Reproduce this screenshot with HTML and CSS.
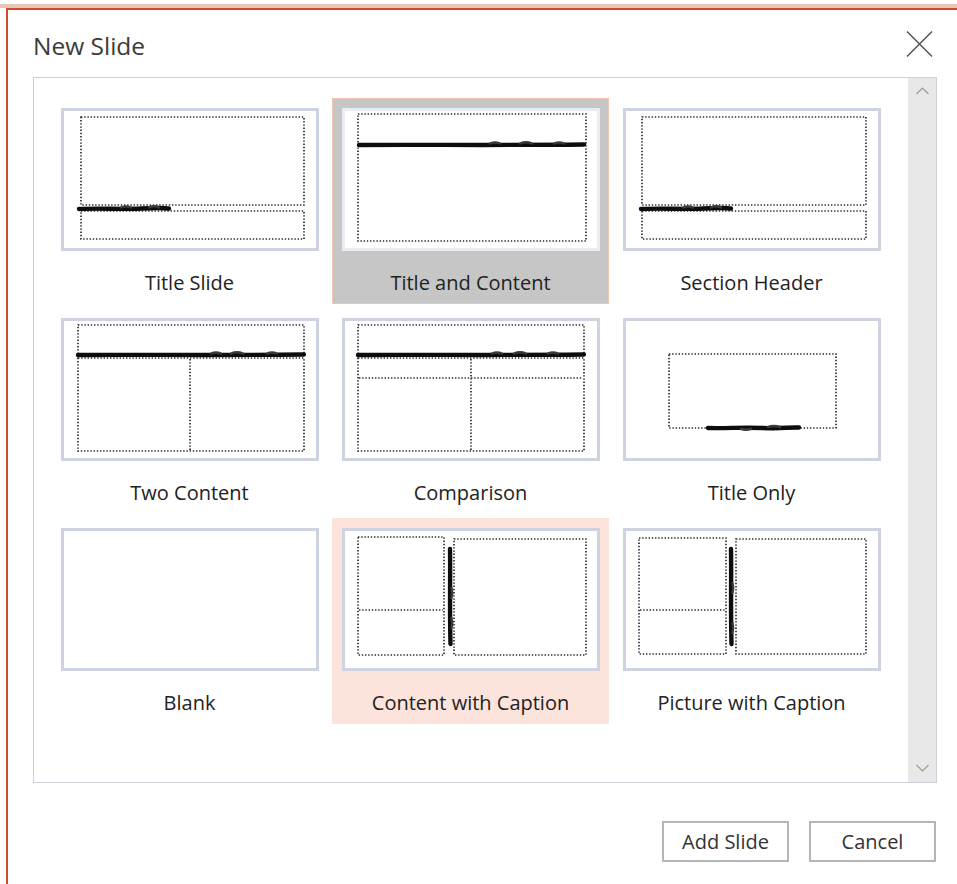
FILE: index.html
```html
<!DOCTYPE html>
<html lang="en">
<head>
<meta charset="utf-8">
<title>New Slide</title>
<link rel="stylesheet" href="styles.css">
</head>
<body>
<div class="shade"></div>
<div class="dialog">
  <div class="dialog-head">
    <h1 class="dialog-title">New Slide</h1>
    <button class="close" aria-label="Close">
      <svg width="28" height="28" viewBox="0 0 28 28"><path d="M1 1.5 L26 26.5 M26 1.5 L1 26.5"/></svg>
    </button>
  </div>

  <div class="layouts">
    <div class="layout-grid">
      <div class="layout">
        <div class="thumb">
          <svg viewBox="3 3 252 137">
            <rect class="ph" x="20" y="9" width="223" height="88"/>
            <rect class="ph" x="20" y="103" width="223" height="28"/>
            <path class="ink" d="M18 101 C40 100 60 101.5 80 100.5 S100 100 108 100.5"/>
            <path class="ink-thin" d="M60 99.5 q5 -2 10 0 M88 99.5 q5 -2.5 10 0"/>
          </svg>
        </div>
        <div class="layout-name">Title Slide</div>
      </div>

      <div class="layout is-selected">
        <div class="thumb">
          <svg viewBox="3 3 252 137">
            <rect class="ph" x="16" y="6" width="228" height="127"/>
            <path class="ink" d="M17 37 C80 36.5 150 37.5 242 36.5"/>
            <path class="ink-thin" d="M148 35.5 q5 -2 10 0 M178 35.5 q6 -2.5 12 0 M212 35.5 q5 -2 10 0"/>
          </svg>
        </div>
        <div class="layout-name">Title and Content</div>
      </div>

      <div class="layout">
        <div class="thumb">
          <svg viewBox="3 3 252 137">
            <rect class="ph" x="19" y="9" width="224" height="88"/>
            <rect class="ph" x="19" y="103" width="224" height="28"/>
            <path class="ink" d="M18 101 C40 100 60 101.5 80 100.5 S100 100 108 100.5"/>
            <path class="ink-thin" d="M60 99.5 q5 -2 10 0 M88 99.5 q5 -2.5 10 0"/>
          </svg>
        </div>
        <div class="layout-name">Section Header</div>
      </div>

      <div class="layout">
        <div class="thumb">
          <svg viewBox="3 3 252 137">
            <rect class="ph" x="17" y="7" width="226" height="30"/>
            <rect class="ph" x="17" y="40" width="226" height="93"/>
            <path class="ph" d="M129 41 L129 133"/>
            <path class="ink" d="M17 37 C80 36.5 150 37.5 243 36.5"/>
            <path class="ink-thin" d="M150 35.5 q5 -2 10 0 M170 35.5 q6 -2.5 12 0 M206 35.5 q5 -2 10 0"/>
          </svg>
        </div>
        <div class="layout-name">Two Content</div>
      </div>

      <div class="layout">
        <div class="thumb">
          <svg viewBox="3 3 252 137">
            <rect class="ph" x="16" y="7" width="226" height="30"/>
            <rect class="ph" x="16" y="40" width="226" height="93"/>
            <path class="ph" d="M17 60 L241 60 M129 41 L129 133"/>
            <path class="ink" d="M16 37 C80 36.5 150 37.5 242 36.5"/>
            <path class="ink-thin" d="M150 35.5 q5 -2 10 0 M172 35.5 q6 -2.5 12 0 M206 35.5 q5 -2 10 0"/>
          </svg>
        </div>
        <div class="layout-name">Comparison</div>
      </div>

      <div class="layout">
        <div class="thumb">
          <svg viewBox="3 3 252 137">
            <rect class="ph" x="46" y="36" width="167" height="74"/>
            <path class="ink" d="M85 110 C105 110.5 120 109 140 110 S165 109 176 109.5"/>
            <path class="ink-thin" d="M118 111 q5 1.5 10 0 M145 109 q6 -2 12 0"/>
          </svg>
        </div>
        <div class="layout-name">Title Only</div>
      </div>

      <div class="layout">
        <div class="thumb">
          <svg viewBox="3 3 252 137"></svg>
        </div>
        <div class="layout-name">Blank</div>
      </div>

      <div class="layout is-hover">
        <div class="thumb">
          <svg viewBox="3 3 252 137">
            <rect class="ph" x="16" y="9" width="86" height="118"/>
            <path class="ph" d="M17 82 L101 82"/>
            <rect class="ph" x="112" y="11" width="132" height="116"/>
            <path class="ink" d="M108 21 C108.5 50 107.5 80 108.5 116"/>
            <path class="ink-thin" d="M109.5 60 q1.5 5 0 10 M109.5 90 q1.5 5 0 10"/>
          </svg>
        </div>
        <div class="layout-name">Content with Caption</div>
      </div>

      <div class="layout">
        <div class="thumb">
          <svg viewBox="3 3 252 137">
            <rect class="ph" x="16" y="10" width="87" height="116"/>
            <path class="ph" d="M17 82 L102 82"/>
            <rect class="ph" x="113" y="11" width="130" height="115"/>
            <path class="ink" d="M108 21 C108.5 50 107.5 80 108.5 116"/>
            <path class="ink-thin" d="M109.5 55 q1.5 5 0 10 M109.5 95 q1.5 5 0 10"/>
          </svg>
        </div>
        <div class="layout-name">Picture with Caption</div>
      </div>
    </div>

    <div class="scrollbar">
      <svg class="chev" width="13" height="8" viewBox="0 0 13 8"><path d="M0.5 7 L6.5 1 L12.5 7"/></svg>
      <svg class="chev" width="13" height="8" viewBox="0 0 13 8"><path d="M0.5 1 L6.5 7 L12.5 1"/></svg>
    </div>
  </div>

  <div class="dialog-foot">
    <button class="btn">Add Slide</button>
    <button class="btn">Cancel</button>
  </div>
</div>
</body>
</html>
```

FILE: styles.css
```css
html, body {
  margin: 0;
  background: #ffffff;
}

body {
  height: 884px;
  overflow: hidden;
  font-family: "Open Sans", "Noto Sans", sans-serif;
  color: #262626;
}

/* window shadow strip above the frame */
.shade {
  height: 4px;
  margin-top: 4px;
  background: #e6c6b7;
}

.dialog {
  margin-left: 6px;
  border-top: 2px solid #cd4b2d;
  border-left: 2px solid #cd4b2d;
  padding: 0 20px 0 25px;
  height: 900px;
}

/* header */
.dialog-head {
  display: flex;
  justify-content: space-between;
  align-items: flex-start;
  padding-top: 21px;
  margin-bottom: 16px;
}

.dialog-title {
  margin: 0;
  font-size: 24.5px;
  font-weight: 400;
  line-height: 30px;
  color: #3b3b3b;
}

.close {
  margin: -1px 3px 0 0;
  padding: 0;
  border: 0;
  background: none;
  width: 28px;
  height: 28px;
}

.close svg {
  display: block;
}

.close path {
  stroke: #5a5a5a;
  stroke-width: 1.6;
  fill: none;
}

/* layout list */
.layouts {
  display: flex;
  height: 706px;
  box-sizing: border-box;
  border: 1px solid #ccd1d9;
}

.layout-grid {
  flex: 1;
  display: grid;
  grid-template-columns: repeat(3, 277px);
  gap: 4px;
  align-content: start;
  padding: 20px 0 0 17px;
}

.layout {
  height: 206px;
  box-sizing: border-box;
  padding-top: 9px;
  border: 1px solid transparent;
  display: flex;
  flex-direction: column;
  align-items: center;
}

.layout.is-selected {
  background: #c6c6c6;
  border-color: #f3c5b0;
}

.layout.is-hover {
  background: #fce3dc;
  border-color: #fce3dc;
}

.thumb {
  width: 258px;
  height: 143px;
  box-sizing: border-box;
  border: 3px solid #cdd4df;
  background: #ffffff;
}

.is-selected .thumb {
  border-color: #e9ecf2;
}

.thumb svg {
  display: block;
  width: 252px;
  height: 137px;
}

/* dotted placeholder outlines */
.ph {
  fill: none;
  stroke: #2b2b2b;
  stroke-width: 1.7;
  stroke-dasharray: 1.4 1.8;
}

/* hand-drawn title strokes */
.ink {
  fill: none;
  stroke: #0d0d0d;
  stroke-width: 4.4;
  stroke-linecap: round;
}

.ink-thin {
  fill: none;
  stroke: #3a3a3a;
  stroke-width: 2.4;
  stroke-linecap: round;
}

.layout-name {
  margin-top: 20px;
  font-size: 20px;
  line-height: 24px;
  color: #222222;
}

/* scrollbar */
.scrollbar {
  width: 28px;
  background: #e8e8e8;
  display: flex;
  flex-direction: column;
  justify-content: space-between;
  align-items: center;
  padding: 9px 0 10px;
  box-sizing: border-box;
}

.chev path {
  fill: none;
  stroke: #9c9c9c;
  stroke-width: 1.2;
}

/* footer buttons */
.dialog-foot {
  display: flex;
  justify-content: flex-end;
  gap: 20px;
  margin-top: 38px;
  margin-right: 1px;
}

.btn {
  width: 127px;
  height: 41px;
  box-sizing: border-box;
  border: 2px solid #b5b5b5;
  background: #ffffff;
  font-family: inherit;
  font-size: 20px;
  color: #333333;
  padding: 0;
}
```
